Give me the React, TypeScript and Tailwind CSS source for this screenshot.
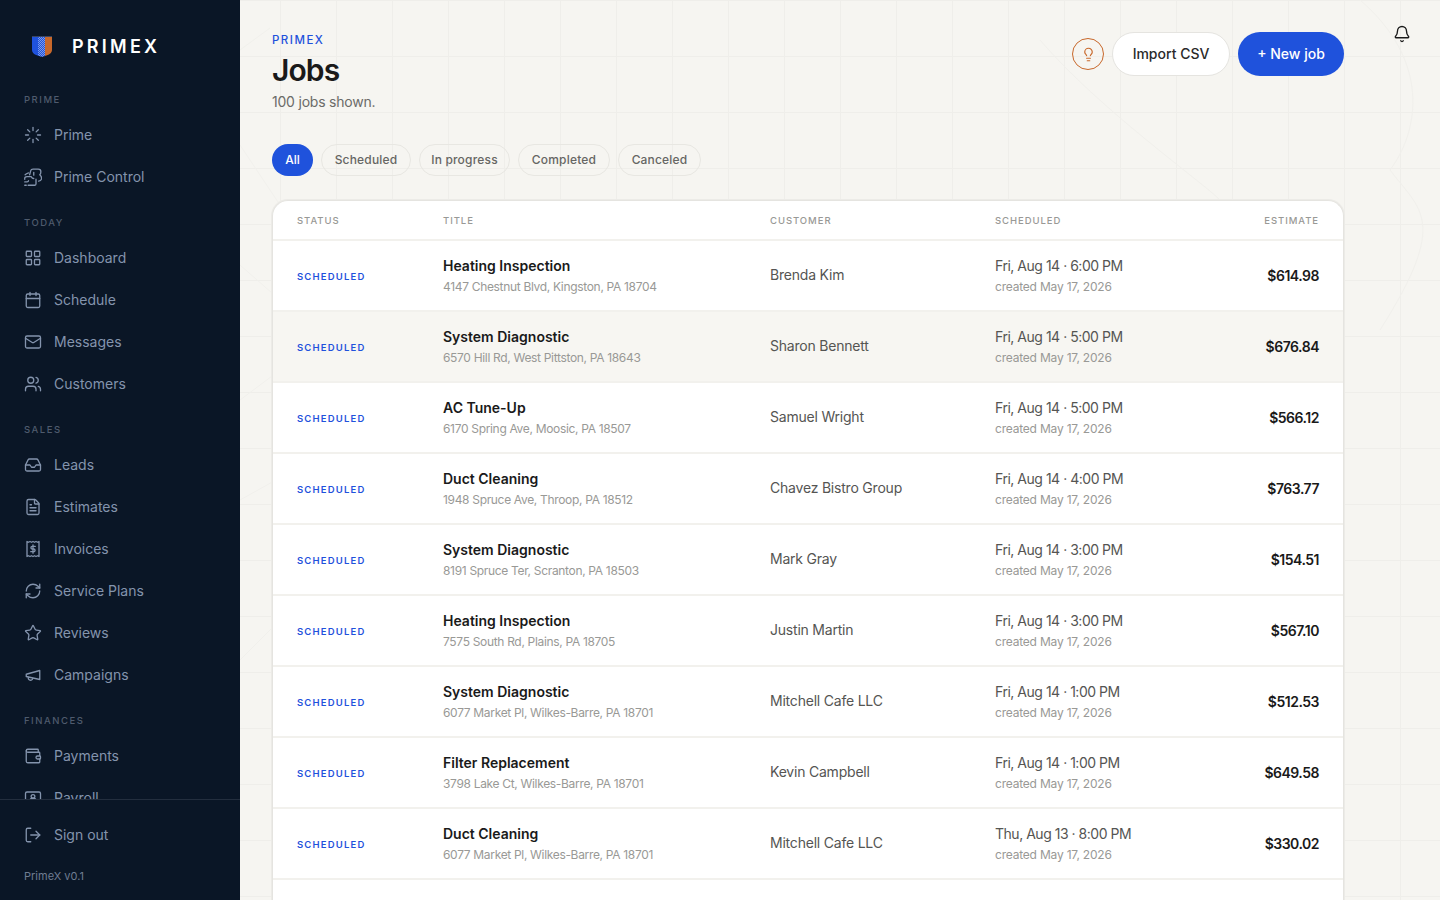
import {
  Bell,
  Calendar,
  FileText,
  Inbox,
  LayoutGrid,
  Lightbulb,
  Loader,
  LogOut,
  Mail,
  RefreshCw,
  Star,
  Users,
  Wallet,
} from "lucide-react";
import type { ComponentType, SVGProps } from "react";

type IconType = ComponentType<SVGProps<SVGSVGElement> & { size?: number; strokeWidth?: number }>;

function ControlIcon(props: SVGProps<SVGSVGElement>) {
  return (
    <svg viewBox="0 0 24 24" fill="none" stroke="currentColor" strokeLinecap="round" strokeLinejoin="round" {...props}>
      <path d="M7.5 9L9 3.5Q9.5 1.5 12 1.5H19Q22.5 1.5 22.5 5Q22.5 8 21 9Q23.5 11 23.5 14Q23 17 19.5 17.5" />
      <path d="M13 9.5V6" />
      <path d="M1.5 9Q3 7.5 6 6.5" />
      <path d="M1 15Q0.5 11.5 4 11.5H9.5Q11 14 13 14" />
      <path d="M1 23H3M5.5 23H14.5Q16 23 16 21V15" />
      <path d="M1 18.5H4Q6 18.5 6 17" />
    </svg>
  );
}

function InvoiceIcon(props: SVGProps<SVGSVGElement>) {
  return (
    <svg viewBox="0 0 24 24" fill="none" stroke="currentColor" strokeLinecap="round" strokeLinejoin="round" {...props}>
      <path d="M4 2l2 1 2-1 2 1 2-1 2 1 2-1 2 1 2-1v20l-2-1-2 1-2-1-2 1-2-1-2 1-2-1-2 1z" />
      <path d="M15 8.5h-4a1.75 1.75 0 0 0 0 3.5h2a1.75 1.75 0 0 1 0 3.5H9" />
      <path d="M12 6.5v11" />
    </svg>
  );
}

function PayrollIcon(props: SVGProps<SVGSVGElement>) {
  return (
    <svg viewBox="0 0 24 24" fill="none" stroke="currentColor" strokeLinecap="round" strokeLinejoin="round" {...props}>
      <rect x="2" y="4" width="20" height="16" rx="2" />
      <circle cx="12" cy="10" r="2.5" />
      <path d="M7 17a5 5 0 0 1 10 0" />
    </svg>
  );
}

function HornIcon(props: SVGProps<SVGSVGElement>) {
  return (
    <svg viewBox="0 0 24 24" fill="none" stroke="currentColor" strokeLinecap="round" strokeLinejoin="round" {...props}>
      <path d="M3 11l18-5v12L3 14z" />
      <path d="M11.6 16.8a3 3 0 1 1-5.8-1.6" />
    </svg>
  );
}

const navSections: { label: string; items: { name: string; icon: IconType }[] }[] = [
  {
    label: "PRIME",
    items: [
      { name: "Prime", icon: Loader },
      { name: "Prime Control", icon: ControlIcon },
    ],
  },
  {
    label: "TODAY",
    items: [
      { name: "Dashboard", icon: LayoutGrid },
      { name: "Schedule", icon: Calendar },
      { name: "Messages", icon: Mail },
      { name: "Customers", icon: Users },
    ],
  },
  {
    label: "SALES",
    items: [
      { name: "Leads", icon: Inbox },
      { name: "Estimates", icon: FileText },
      { name: "Invoices", icon: InvoiceIcon },
      { name: "Service Plans", icon: RefreshCw },
      { name: "Reviews", icon: Star },
      { name: "Campaigns", icon: HornIcon },
    ],
  },
  {
    label: "FINANCES",
    items: [
      { name: "Payments", icon: Wallet },
      { name: "Payroll", icon: PayrollIcon },
    ],
  },
];

const tabs = [
  { label: "Scheduled", width: "w-[90px]" },
  { label: "In progress", width: "w-[91px]" },
  { label: "Completed", width: "w-[92px]" },
  { label: "Canceled", width: "w-[83px]" },
];

const jobs = [
  { title: "Heating Inspection", address: "4147 Chestnut Blvd, Kingston, PA 18704", customer: "Brenda Kim", when: "Fri, Aug 14 · 6:00 PM", estimate: "$614.98" },
  { title: "System Diagnostic", address: "6570 Hill Rd, West Pittston, PA 18643", customer: "Sharon Bennett", when: "Fri, Aug 14 · 5:00 PM", estimate: "$676.84" },
  { title: "AC Tune-Up", address: "6170 Spring Ave, Moosic, PA 18507", customer: "Samuel Wright", when: "Fri, Aug 14 · 5:00 PM", estimate: "$566.12" },
  { title: "Duct Cleaning", address: "1948 Spruce Ave, Throop, PA 18512", customer: "Chavez Bistro Group", when: "Fri, Aug 14 · 4:00 PM", estimate: "$763.77" },
  { title: "System Diagnostic", address: "8191 Spruce Ter, Scranton, PA 18503", customer: "Mark Gray", when: "Fri, Aug 14 · 3:00 PM", estimate: "$154.51" },
  { title: "Heating Inspection", address: "7575 South Rd, Plains, PA 18705", customer: "Justin Martin", when: "Fri, Aug 14 · 3:00 PM", estimate: "$567.10" },
  { title: "System Diagnostic", address: "6077 Market Pl, Wilkes-Barre, PA 18701", customer: "Mitchell Cafe LLC", when: "Fri, Aug 14 · 1:00 PM", estimate: "$512.53" },
  { title: "Filter Replacement", address: "3798 Lake Ct, Wilkes-Barre, PA 18701", customer: "Kevin Campbell", when: "Fri, Aug 14 · 1:00 PM", estimate: "$649.58" },
  { title: "Duct Cleaning", address: "6077 Market Pl, Wilkes-Barre, PA 18701", customer: "Mitchell Cafe LLC", when: "Thu, Aug 13 · 8:00 PM", estimate: "$330.02" },
];

function Logo() {
  return (
    <svg width="20" height="21" viewBox="0 0 20 21" className="shrink-0">
      <defs>
        <pattern id="dots" width="2" height="2" patternUnits="userSpaceOnUse">
          <rect width="2" height="2" fill="#1f52dc" />
          <rect width="1" height="1" fill="#7f9be8" />
          <rect x="1" y="1" width="1" height="1" fill="#7f9be8" />
        </pattern>
        <clipPath id="shield">
          <path d="M0 0h20v14c0 3-3 5-7 6l-3 1-3-1c-4-1-7-3-7-6z" />
        </clipPath>
      </defs>
      <g clipPath="url(#shield)">
        <rect width="7" height="21" fill="#1f52dc" />
        <rect x="6" width="7" height="21" fill="url(#dots)" />
        <rect x="13" width="7" height="21" fill="#c8682b" />
        <rect width="20" height="1" fill="#3b4660" />
      </g>
    </svg>
  );
}

function Sidebar() {
  return (
    <aside className="flex h-full w-60 shrink-0 flex-col bg-[#0a1626]">
      <div className="flex h-[93px] shrink-0 items-center gap-5 pl-8">
        <Logo />
        <span className="text-lg leading-none font-semibold tracking-[0.18em] text-white">PRIMEX</span>
      </div>
      <nav className="min-h-0 flex-1 overflow-hidden">
        {navSections.map((section) => (
          <div key={section.label} className="mb-[18px]">
            <p className="mb-2 h-[13px] px-6 text-[9.5px] leading-[13px] font-medium tracking-[0.16em] text-[#4f5b6d]">
              {section.label}
            </p>
            {section.items.map(({ name, icon: Icon }) => (
              <div key={name} className="flex h-[42px] items-center gap-3 px-6 text-sm text-[#8494ad]">
                <Icon width={18} height={18} strokeWidth={1.75} className="shrink-0" />
                {name}
              </div>
            ))}
          </div>
        ))}
      </nav>
      <div className="h-[101px] shrink-0 border-t border-[#232e3e]">
        <div className="mt-[14px] flex h-[42px] items-center gap-3 px-6 text-sm text-[#8494ad]">
          <LogOut width={18} height={18} strokeWidth={1.75} className="shrink-0" />
          Sign out
        </div>
        <p className="mt-3 px-6 text-[11px] leading-4 text-[#6f7d92]">PrimeX v0.1</p>
      </div>
    </aside>
  );
}

function JobRow({ job, shaded }: { job: (typeof jobs)[number]; shaded: boolean }) {
  return (
    <div
      className={`grid h-[71px] grid-cols-[146px_327px_225px_1fr_auto] items-center border-b-2 border-[#f2f1ed] px-6 ${
        shaded ? "bg-[#f7f6f2]" : "bg-white"
      }`}
    >
      <span className="pt-1 text-[9.5px] font-semibold tracking-[0.124em] text-[#1f52dc]">SCHEDULED</span>
      <div>
        <p className="text-sm leading-5 font-semibold text-[#1a1a1a]">{job.title}</p>
        <p className="translate-y-px text-xs leading-5 tracking-[-0.027em] text-[#999996]">{job.address}</p>
      </div>
      <span className="pb-0.5 text-sm tracking-[-0.015em] text-[#555553]">{job.customer}</span>
      <div>
        <p className="text-sm leading-5 tracking-[-0.034em] text-[#555553]">{job.when}</p>
        <p className="translate-y-px text-xs leading-5 tracking-[-0.017em] text-[#999996]">created May 17, 2026</p>
      </div>
      <span className="text-right text-sm font-semibold tracking-[-0.035em] text-[#1a1a1a]">{job.estimate}</span>
    </div>
  );
}

export default function App() {
  return (
    <div className="flex h-screen overflow-hidden bg-[#f6f5f1] font-['Inter','Liberation_Sans',sans-serif]">
      <Sidebar />
      <main className="relative flex h-full min-w-0 flex-1 flex-col bg-[linear-gradient(#efeeea_1px,transparent_1px),linear-gradient(90deg,#efeeea_1px,transparent_1px)] bg-[size:56px_56px] bg-[position:-240px_0px] pr-24 pl-8">
        <svg className="pointer-events-none absolute inset-0 h-full w-full" fill="none" stroke="#f1f0ec" strokeWidth={1}>
          <path d="M0 50L30 28M0 145L40 205M0 265L40 300M0 400L40 370M0 500L45 475M0 660L40 620" />
          <path d="M800 40C860 110 960 180 980 200M1120 0C1190 60 1180 130 1150 170C1180 210 1210 220 1140 330" />
        </svg>
        <button className="absolute top-[25px] right-[29px] text-[#1a1a1a]" aria-label="Notifications">
          <Bell width={18} height={18} strokeWidth={1.8} />
        </button>

        <header className="relative flex h-[144px] shrink-0 items-start justify-between">
          <div className="pt-8">
            <p className="text-[11.5px] leading-4 font-medium tracking-[0.13em] text-[#1f52dc]">PRIMEX</p>
            <h1 className="mt-1 text-3xl leading-9 font-semibold tracking-[-0.03em] text-[#1a1a1a]">Jobs</h1>
            <p className="mt-1 text-sm leading-5 tracking-[-0.015em] text-[#6b6b68]">100 jobs shown.</p>
          </div>
          <div className="flex items-center gap-2 pt-8">
            <button className="flex h-8 w-8 items-center justify-center rounded-full border border-[#c8682b] text-[#c8682b]" aria-label="Tips">
              <Lightbulb width={15} height={15} strokeWidth={1.9} />
            </button>
            <button className="h-11 w-[118px] rounded-full border border-[#e5e4e0] bg-white text-sm font-medium text-[#2a2a2a]">
              Import CSV
            </button>
            <button className="h-11 w-[106px] rounded-full bg-[#1f52dc] text-sm font-medium text-white">+ New job</button>
          </div>
        </header>

        <div className="relative flex h-8 shrink-0 gap-2">
          <button className="w-[41px] rounded-full bg-[#1f52dc] text-xs font-medium text-white">All</button>
          {tabs.map((tab) => (
            <button
              key={tab.label}
              className={`${tab.width} rounded-full border border-[#e8e7e2] text-xs font-medium tracking-[0.015em] text-[#666663]`}
            >
              {tab.label}
            </button>
          ))}
        </div>

        <section className="relative mt-6 min-h-0 flex-1 overflow-hidden rounded-t-2xl border border-b-0 border-[#e5e4e0] bg-white shadow-[0_0_0_1px_#ecebe7]">
          <div className="grid h-10 grid-cols-[146px_327px_225px_1fr_auto] items-center border-b-2 border-[#f2f1ed] px-6 pt-0.5 text-[9.5px] font-medium tracking-[0.1em] text-[#999996]">
            <span>STATUS</span>
            <span>TITLE</span>
            <span>CUSTOMER</span>
            <span>SCHEDULED</span>
            <span className="text-right">ESTIMATE</span>
          </div>
          {jobs.map((job, i) => (
            <JobRow key={job.address + job.when} job={job} shaded={i === 1} />
          ))}
        </section>
      </main>
    </div>
  );
}
